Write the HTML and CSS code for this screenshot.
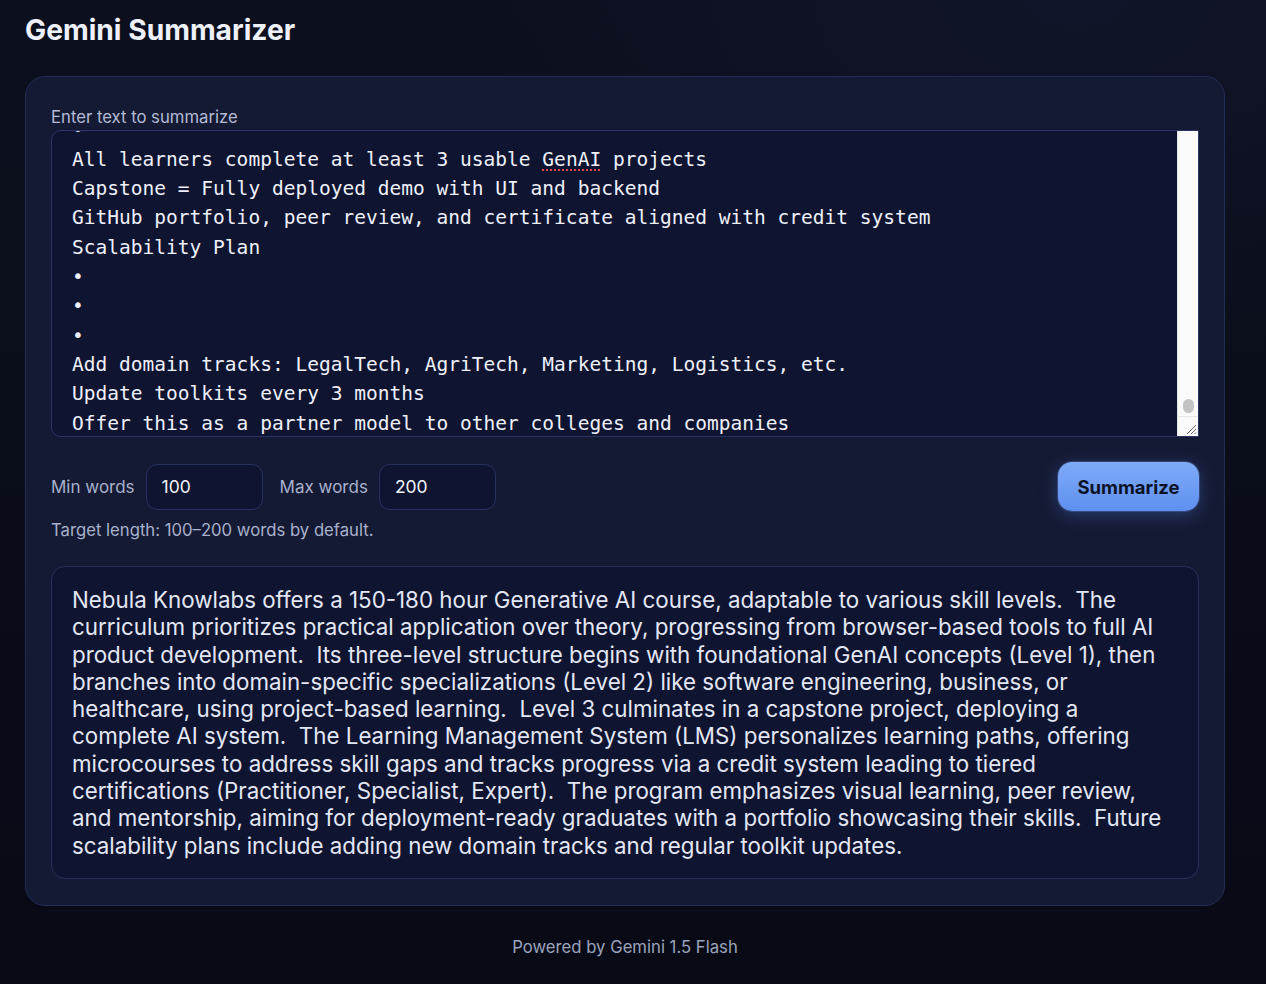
FILE: index.html
```html
<!DOCTYPE html>
<html lang="en">
<head>
<meta charset="utf-8">
<title>Gemini Summarizer</title>
<link rel="stylesheet" href="styles.css">
</head>
<body>
<main class="page">
  <h1 class="title">Gemini Summarizer</h1>
  <section class="card">
    <label class="field-label">Enter text to summarize</label>
    <div class="editor-wrap">
      <div class="editor" role="textbox" aria-multiline="true">
        <div class="editor-text">•
All learners complete at least 3 usable <span class="misspelled">GenAI</span> projects
Capstone = Fully deployed demo with UI and backend
GitHub portfolio, peer review, and certificate aligned with credit system
Scalability Plan
•
•
•
Add domain tracks: LegalTech, AgriTech, Marketing, Logistics, etc.
Update toolkits every 3 months
Offer this as a partner model to other colleges and companies</div>
      </div>
      <div class="scrollbar" aria-hidden="true">
        <div class="scroll-track"><div class="scroll-thumb"></div></div>
        <div class="scroll-corner">
          <svg width="12" height="12" viewBox="0 0 12 12"><path d="M11 2 L2 11 M11 6 L6 11 M11 9.5 L9.5 11" stroke="#6b6b6b" stroke-width="1" fill="none"/></svg>
        </div>
      </div>
    </div>

    <div class="controls">
      <div class="word-fields">
        <span class="ctl-label">Min words</span>
        <div class="num-input">100</div>
        <span class="ctl-label second">Max words</span>
        <div class="num-input">200</div>
      </div>
      <button class="btn">Summarize</button>
    </div>
    <p class="hint">Target length: 100–200 words by default.</p>

    <div class="summary">Nebula Knowlabs offers a 150-180 hour Generative AI course, adaptable to various skill levels.  The curriculum prioritizes practical application over theory, progressing from browser-based tools to full AI product development.  Its three-level structure begins with foundational GenAI concepts (Level 1), then branches into domain-specific specializations (Level 2) like software engineering, business, or healthcare, using project-based learning.  Level 3 culminates in a capstone project, deploying a complete AI system.  The Learning Management System (LMS) personalizes learning paths, offering microcourses to address skill gaps and tracks progress via a credit system leading to tiered certifications (Practitioner, Specialist, Expert).  The program emphasizes visual learning, peer review, and mentorship, aiming for deployment-ready graduates with a portfolio showcasing their skills.  Future scalability plans include adding new domain tracks and regular toolkit updates.</div>
  </section>
  <footer class="footer">Powered by Gemini 1.5 Flash</footer>
</main>
</body>
</html>
```

FILE: styles.css
```css
* { box-sizing: border-box; }
html, body { height: 100%; }
body {
  margin: 0;
  font-family: Inter, "Noto Sans", "Liberation Sans", sans-serif;
  color: #e6e9f5;
  background:
    radial-gradient(ellipse 900px 500px at 85% 0%, #111529 0%, rgba(17,21,41,0) 70%),
    linear-gradient(180deg, #0c0f1d 0%, #080b16 100%);
  min-height: 984px;
}
.page {
  padding: 12px 41px 0 25px;
}
.title {
  margin: 0;
  font-size: 28.2px;
  line-height: 36px;
  font-weight: 700;
  color: #eef0fa;
}
.card {
  margin-top: 28px;
  background: #141a33;
  border: 1px solid #232c55;
  border-radius: 20px;
  padding: 30px 25px 26px 25px;
}
.field-label {
  display: block;
  font-size: 16.7px;
  line-height: 20px;
  color: #b4bbd6;
  margin-bottom: 3px;
}
.editor-wrap {
  position: relative;
  height: 307px;
  border: 1px solid #2a3563;
  border-radius: 10px 0 0 10px;
  background: #0f1430;
  overflow: hidden;
}
.editor {
  height: 100%;
  overflow: hidden;
  display: flex;
  flex-direction: column;
  justify-content: flex-end;
  padding: 0 40px 0 20px;
}
.editor-text {
  white-space: pre-wrap;
  font-family: "DejaVu Sans Mono", "Liberation Mono", monospace;
  font-size: 19.55px;
  line-height: 29.35px;
  color: #eef0fa;
  margin-bottom: -2px;
  flex-shrink: 0;
}
.misspelled {
  text-decoration: underline dotted #e5484d;
  text-decoration-thickness: 2px;
  text-underline-offset: 4px;
}
.scrollbar {
  position: absolute;
  top: 0;
  right: 0;
  bottom: 0;
  width: 21px;
  background: #fafafa;
  border-left: 1px solid #e2e2e2;
  display: flex;
  flex-direction: column;
}
.scroll-track {
  flex: 1;
  display: flex;
  flex-direction: column;
  justify-content: flex-end;
  align-items: center;
  padding-bottom: 3px;
}
.scroll-thumb {
  width: 11px;
  height: 14px;
  border-radius: 6px;
  background: #c3c3c3;
}
.scroll-corner {
  height: 20px;
  border-top: 1px solid #e6e6e6;
  display: flex;
  align-items: flex-end;
  justify-content: flex-end;
  padding: 0 1px 1px 0;
}
.scroll-corner svg { display: block; }

.controls {
  margin-top: 25px;
  display: flex;
  align-items: center;
  justify-content: space-between;
}
.word-fields {
  display: flex;
  align-items: center;
}
.ctl-label {
  font-size: 17px;
  color: #a9b1cc;
  margin-right: 11px;
}
.ctl-label.second { margin-left: 17px; }
.num-input {
  width: 117px;
  height: 46px;
  border: 1px solid #27315d;
  border-radius: 11px;
  background: #0f1430;
  color: #f2f4fb;
  font-size: 17.5px;
  display: flex;
  align-items: center;
  padding-left: 15px;
}
.btn {
  width: 141px;
  height: 49px;
  border: none;
  border-radius: 14px;
  background: linear-gradient(180deg, #7eaaf7 0%, #5f90f0 100%);
  color: #0c1226;
  font-family: inherit;
  font-size: 18.5px;
  font-weight: 700;
  box-shadow: 0 4px 18px rgba(86, 130, 230, 0.35), 0 0 0 1px rgba(120,160,245,0.25);
}
.hint {
  margin: 9px 0 0;
  font-size: 16.7px;
  line-height: 20px;
  color: #a9b1cc;
}
.summary {
  margin-top: 26px;
  border: 1px solid #26305a;
  border-radius: 14px;
  background: #0f1430;
  padding: 19px 20px 19px 20px;
  white-space: pre-wrap;
  font-size: 22.35px;
  line-height: 27.3px;
  color: #e3e7f5;
}
.footer {
  margin-top: 31px;
  text-align: center;
  font-size: 16.7px;
  color: #9ba3bd;
}
```
